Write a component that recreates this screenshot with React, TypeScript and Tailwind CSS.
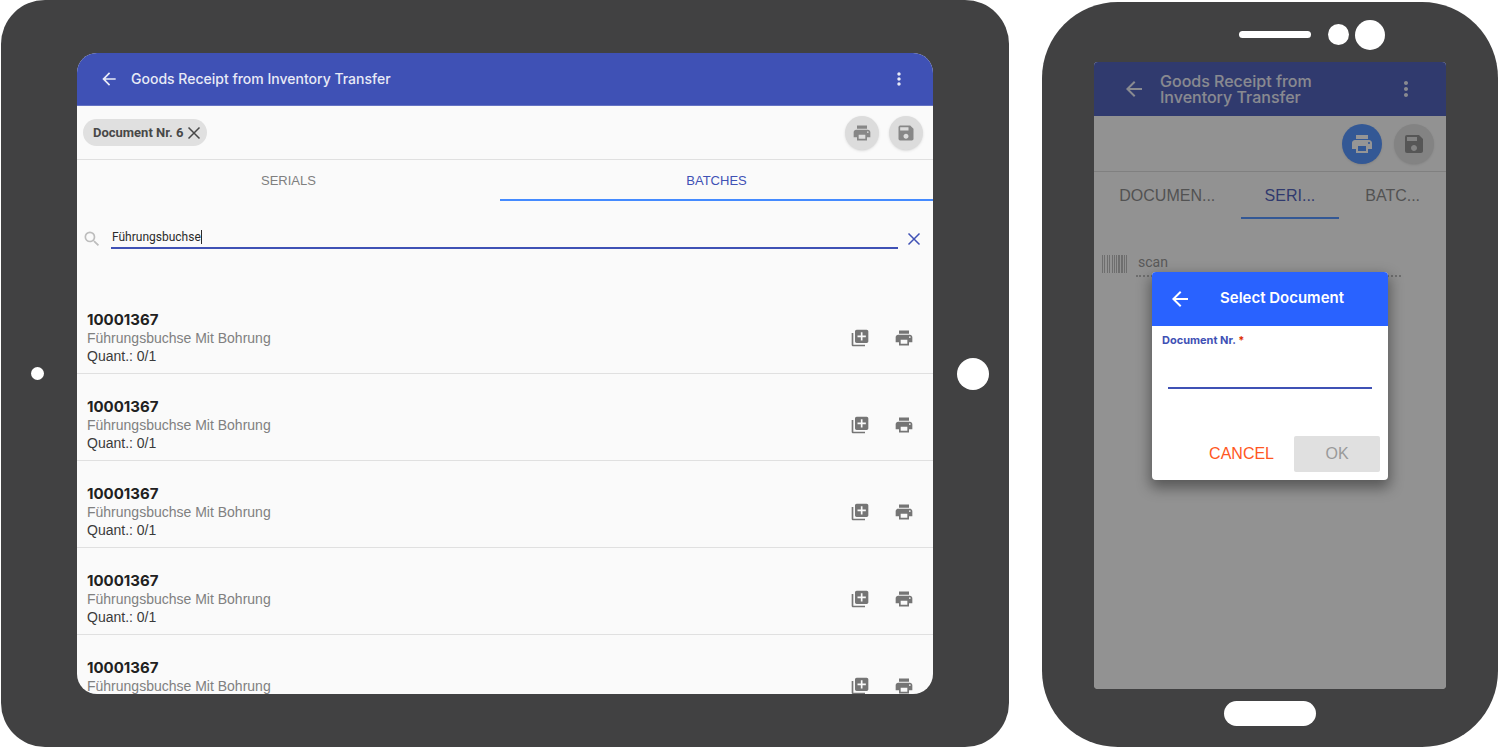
import { useState } from "react";
import { MdArrowBack, MdLibraryAdd, MdMoreVert, MdPrint, MdSave, MdSearch } from "react-icons/md";

const rows = [
  { id: 1, batch: "10001367", name: "Führungsbuchse Mit Bohrung", quantity: "0/1" },
  { id: 2, batch: "10001367", name: "Führungsbuchse Mit Bohrung", quantity: "0/1" },
  { id: 3, batch: "10001367", name: "Führungsbuchse Mit Bohrung", quantity: "0/1" },
  { id: 4, batch: "10001367", name: "Führungsbuchse Mit Bohrung", quantity: "0/1" },
  { id: 5, batch: "10001367", name: "Führungsbuchse Mit Bohrung", quantity: "0/1" },
];

// x, width
const bars = [
  [0, 1], [2, 1], [5, 1], [7, 1], [10, 1], [12, 1], [14, 1], [16, 2], [19, 2], [22, 1], [24, 1],
];

function Cross() {
  return (
    <svg width="14" height="14" viewBox="0 0 14 14" fill="none" stroke="currentColor" strokeWidth="1.5">
      <path d="M1.5 1.5l11 11M12.5 1.5l-11 11" />
    </svg>
  );
}

function Barcode() {
  return (
    <svg width="25" height="18" viewBox="0 0 25 18" fill="currentColor" className="shrink-0 text-[#b4b4b4]">
      {bars.map(([x, w]) => (
        <rect key={x} x={x} y="0" width={w} height="18" />
      ))}
    </svg>
  );
}

function Tablet() {
  const [search, setSearch] = useState("Führungsbuchse");

  return (
    <section className="flex min-w-0 rounded-[44px] bg-[#414142] py-[53px]">
      <div className="flex w-[76px] shrink-0 items-center justify-center pr-1">
        <span className="size-[13px] rounded-full bg-white" />
      </div>

      <div className="flex min-w-0 flex-1 flex-col overflow-hidden rounded-[20px] bg-[#fafafa]">
        <header className="flex h-[53px] shrink-0 items-center border-b border-[#6573c3] bg-[#3f51b5] pr-6 pl-[22px] text-[#e8eaf6]">
          <button type="button" aria-label="Back">
            <MdArrowBack size={20} />
          </button>
          <h1 className="ml-3 flex-1 font-['Inter'] text-[14px] leading-4 font-medium">Goods Receipt from Inventory Transfer</h1>
          <button type="button" aria-label="Menu">
            <MdMoreVert size={20} />
          </button>
        </header>

        <div className="flex h-[54px] shrink-0 items-center border-b border-[#e0e0e0] pr-[10px] pl-[6px]">
          <span className="flex h-[27px] items-center gap-1 rounded-full bg-[#e0e0e0] pr-[6px] pl-[10px] font-['Roboto'] text-[13px] font-bold text-[#484848]">
            Document Nr. 6
            <button type="button" aria-label="Remove">
              <Cross />
            </button>
          </span>
          <div className="ml-auto flex gap-[10px]">
            <button type="button" aria-label="Print" className="grid size-[34px] place-items-center rounded-full bg-[#dcdcdc] text-[#878787] shadow">
              <MdPrint size={20} />
            </button>
            <button type="button" aria-label="Save" className="grid size-[34px] place-items-center rounded-full bg-[#dcdcdc] text-[#878787] shadow">
              <MdSave size={20} />
            </button>
          </div>
        </div>

        <nav className="grid h-[41px] shrink-0 grid-cols-[423fr_433fr] font-['Liberation_Sans'] text-[13px]">
          <button type="button" className="border-b-2 border-transparent pt-0.5 text-[#7f7f7f]">SERIALS</button>
          <button type="button" className="border-b-2 border-[#448aff] pt-0.5 text-[#3f51b5]">BATCHES</button>
        </nav>

        <div className="flex shrink-0 items-end pt-[25px] pr-3 pl-[5px]">
          <MdSearch size={20} className="text-[#bdbdbd]" />
          <label className="mx-[9px] flex h-[23px] flex-1 items-center border-b-2 border-[#3f51b5]">
            <input
              aria-label="Search"
              className="field-sizing-content max-w-full bg-transparent pl-px font-['Roboto'] text-[12px] text-[#2b2b2b] outline-none"
              value={search}
              onChange={e => setSearch(e.target.value)}
            />
            <span className="h-[14px] w-px bg-[#2b2b2b]" />
          </label>
          <button type="button" aria-label="Clear" className="grid h-5 place-items-center text-[#3f51b5]" onClick={() => setSearch("")}>
            <Cross />
          </button>
        </div>

        <ul className="mt-[38px] min-h-0 flex-1 overflow-hidden font-['Liberation_Sans'] text-[14px]">
          {rows.map(row => (
            <li key={row.id} className="flex h-[87px] items-center border-b border-[#e0e0e0] pt-4 pr-[19px] pl-[10px]">
              <div className="flex-1 leading-[18px]">
                <p className="font-['Inter'] text-[15px] leading-[18px] font-bold text-[#212121]">{row.batch}</p>
                <p className="text-[#808080]">{row.name}</p>
                <p className="text-[#3a3a3a]">Quant.: {row.quantity}</p>
              </div>
              <div className="flex gap-6 text-[#757575]">
                <button type="button" aria-label="Add">
                  <MdLibraryAdd size={20} />
                </button>
                <button type="button" aria-label="Print">
                  <MdPrint size={20} />
                </button>
              </div>
            </li>
          ))}
        </ul>
      </div>

      <div className="flex w-[76px] shrink-0 items-center justify-center pl-1">
        <span className="size-8 rounded-full bg-white" />
      </div>
    </section>
  );
}

function SelectDocument() {
  const [nr, setNr] = useState("");

  return (
    <div role="dialog" aria-label="Select Document" className="w-[236px] overflow-hidden rounded bg-white shadow-[0_6px_14px_2px_rgba(0,0,0,0.4)]">
      <div className="flex h-[54px] items-center bg-[#2962ff] px-4 text-white">
        <button type="button" aria-label="Back">
          <MdArrowBack size={24} />
        </button>
        <h2 className="flex-1 pl-[28px] font-['Inter'] text-[15px] font-semibold">Select Document</h2>
      </div>
      <label htmlFor="document-nr" className="block px-[10px] pt-[6px] font-['Inter'] text-[11px] leading-4 font-bold text-[#3f51b5]">
        Document Nr. <span className="text-[#dd2c00]">*</span>
      </label>
      <div className="px-4">
        <input
          id="document-nr"
          required
          className="h-[41px] w-full border-b-2 border-[#3f51b5] text-[14px] outline-none"
          value={nr}
          onChange={e => setNr(e.target.value)}
        />
      </div>
      <div className="mt-[47px] mb-2 flex justify-end gap-2 pr-2 font-['Liberation_Sans'] text-[16px]">
        <button type="button" className="h-9 px-3 text-[#ff5722]">CANCEL</button>
        <button type="button" disabled={!nr} className="h-9 w-[86px] rounded-xs bg-[#e0e0e0] text-[#9a9a9a]">OK</button>
      </div>
    </div>
  );
}

function Phone() {
  return (
    <section className="mt-0.5 flex min-w-0 flex-col rounded-[76px] bg-[#414142] px-[52px]">
      <div className="flex h-[60px] shrink-0 items-center justify-center pt-[5px] pl-[84px]">
        <span className="h-[7px] w-[72px] rounded-full bg-white" />
        <span className="ml-[17px] size-[21px] rounded-full bg-white" />
        <span className="ml-[6px] size-[30px] rounded-full bg-white" />
      </div>

      <div className="relative flex min-h-0 flex-1 flex-col overflow-hidden rounded-[4px] bg-[#fafafa]">
        <header className="flex h-[54px] shrink-0 items-center bg-[#3f51b5] px-7 text-[#e8eaf6]">
          <button type="button" aria-label="Back">
            <MdArrowBack size={24} />
          </button>
          <h1 className="ml-[14px] w-[170px] font-['Inter'] text-[16px] leading-4 font-medium">Goods Receipt from Inventory Transfer</h1>
          <button type="button" aria-label="Menu" className="ml-auto">
            <MdMoreVert size={24} />
          </button>
        </header>

        <div className="flex h-14 shrink-0 items-center justify-end gap-3 border-b border-[#d6d6d6] pr-3">
          <button type="button" aria-label="Print" className="grid size-10 place-items-center rounded-full bg-[#448aff] text-white shadow">
            <MdPrint size={24} />
          </button>
          <button type="button" aria-label="Save" className="grid size-10 place-items-center rounded-full bg-[#dcdcdc] text-[#878787] shadow">
            <MdSave size={24} />
          </button>
        </div>

        <nav className="grid h-[47px] shrink-0 grid-cols-[147fr_99fr_107fr] font-['Liberation_Sans'] text-[16px] text-[#7f7f7f]">
          <button type="button" className="border-b-2 border-transparent pt-0.5">DOCUMEN...</button>
          <button type="button" className="border-b-2 border-[#448aff] pt-0.5 text-[#3f51b5]">SERI...</button>
          <button type="button" className="border-b-2 border-transparent pt-0.5">BATC...</button>
        </nav>

        <div className="flex items-center gap-[9px] pt-[32px] pr-[45px] pl-2">
          <Barcode />
          <input
            aria-label="scan"
            placeholder="scan"
            className="h-[26px] min-w-0 flex-1 border-b-2 border-dotted border-[#b4b4b4] pb-0.5 pl-0.5 font-['Roboto'] text-[14px] placeholder:text-[#8c8c8c]"
          />
        </div>

        <div className="absolute inset-0 flex items-center justify-center bg-[#212121]/48">
          <SelectDocument />
        </div>
      </div>

      <div className="flex h-[58px] shrink-0 items-center justify-center pb-[10px]">
        <span className="h-[25px] w-[92px] rounded-full bg-white" />
      </div>
    </section>
  );
}

export default function App() {
  return (
    <main className="grid h-screen grid-cols-[1008fr_456fr] grid-rows-[minmax(0,1fr)] gap-[33px] bg-white pr-3 pb-0.5 pl-px">
      <Tablet />
      <Phone />
    </main>
  );
}
